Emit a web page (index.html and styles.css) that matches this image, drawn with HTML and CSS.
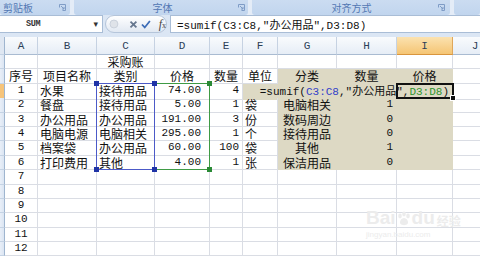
FILE: index.html
```html
<!DOCTYPE html>
<html lang="zh-CN">
<head>
<meta charset="utf-8">
<link rel="stylesheet" href="styles.css">
</head>
<body>
<div class="ribbon">
  <div class="grp g1"><span class="lbl">剪贴板</span><svg class="launch" width="7" height="7" viewBox="0 0 7 7"><path d="M0.5 3.5V0.5H6.5V6.5H3.5" fill="none" stroke="#7f9cc6"/><path d="M2 2L5 5M5 3V5H3" fill="none" stroke="#7f9cc6"/></svg></div>
  <div class="grp g2"><span class="lbl">字体</span><svg class="launch" width="7" height="7" viewBox="0 0 7 7"><path d="M0.5 3.5V0.5H6.5V6.5H3.5" fill="none" stroke="#7f9cc6"/><path d="M2 2L5 5M5 3V5H3" fill="none" stroke="#7f9cc6"/></svg></div>
  <div class="grp g3"><span class="lbl">对齐方式</span><svg class="launch" width="7" height="7" viewBox="0 0 7 7"><path d="M0.5 3.5V0.5H6.5V6.5H3.5" fill="none" stroke="#7f9cc6"/><path d="M2 2L5 5M5 3V5H3" fill="none" stroke="#7f9cc6"/></svg></div>
  <div class="grp g4"></div>
</div>

<div class="fbar">
  <div class="namebox"><span class="nm">SUM</span><span class="dd">▾</span></div>
  <div class="fbtns">
    <svg class="grip" width="10" height="10" viewBox="0 0 10 10"><circle cx="5" cy="5" r="4" fill="#dfe3e9" stroke="#c9d0da"/></svg>
    <svg class="ic-x" width="9" height="9" viewBox="0 0 9 9"><path d="M1.5 1.5L7.5 7.5M7.5 1.5L1.5 7.5" stroke="#66778f" stroke-width="1.8"/></svg>
    <svg class="ic-ok" width="10" height="9" viewBox="0 0 10 9"><path d="M1 4.5L3.8 7.5L9 1" fill="none" stroke="#3d6db7" stroke-width="1.8"/></svg>
    <span class="fx"><i>f</i><span class="fxx">x</span></span>
  </div>
  <div class="formula">=sumif(C3:C8,"<span class="zh11">办公用品</span>",D3:D8)</div>
</div>

<div class="gap"></div>

<div class="sheet">
  <div class="row hdr">
    <div class="rh corner"></div><div>A</div><div>B</div><div>C</div><div>D</div><div>E</div><div>F</div><div>G</div><div>H</div><div class="sel">I</div><div>J</div>
  </div>
  <div class="row">
    <div class="rh"></div><div></div><div></div><div class="c zh">采购账</div><div></div><div></div><div></div><div></div><div></div><div></div><div></div>
  </div>
  <div class="row">
    <div class="rh"></div><div class="c zh">序号</div><div class="c zh">项目名称</div><div class="c zh">类别</div><div class="c zh">价格</div><div class="c zh">数量</div><div class="c zh">单位</div><div class="c zh tan">分类</div><div class="c zh tan">数量</div><div class="c zh tan">价格</div><div></div>
  </div>
  <div class="row">
    <div class="rh act"></div><div class="c">1</div><div class="zh">水果</div><div class="zh">接待用品</div><div class="r num">74.00</div><div class="r">4</div><div class="r tan edit">=sumif(<span class="refc">C3:C8</span>,"<span class="zh11">办公用品</span>",<span class="refd">D3:D8</span>)</div><div></div>
  </div>
  <div class="row">
    <div class="rh"></div><div class="c">2</div><div class="zh">餐盘</div><div class="zh">接待用品</div><div class="r num">5.00</div><div class="r">1</div><div class="zh">袋</div><div class="c zh tan">电脑相关</div><div class="r tan">1</div><div class="tan"></div><div></div>
  </div>
  <div class="row">
    <div class="rh"></div><div class="c">3</div><div class="zh">办公用品</div><div class="zh">办公用品</div><div class="r num">191.00</div><div class="r">3</div><div class="zh">份</div><div class="c zh tan">数码周边</div><div class="r tan">0</div><div class="tan"></div><div></div>
  </div>
  <div class="row">
    <div class="rh"></div><div class="c">4</div><div class="zh">电脑电源</div><div class="zh">电脑相关</div><div class="r num">295.00</div><div class="r">1</div><div class="zh">个</div><div class="c zh tan">接待用品</div><div class="r tan">0</div><div class="tan"></div><div></div>
  </div>
  <div class="row">
    <div class="rh"></div><div class="c">5</div><div class="zh">档案袋</div><div class="zh">办公用品</div><div class="r num">60.00</div><div class="r">100</div><div class="zh">袋</div><div class="c zh tan">其他</div><div class="r tan">1</div><div class="tan"></div><div></div>
  </div>
  <div class="row">
    <div class="rh"></div><div class="c">6</div><div class="zh">打印费用</div><div class="zh">其他</div><div class="r num">4.00</div><div class="r">1</div><div class="zh">张</div><div class="c zh tan">保洁用品</div><div class="r tan">0</div><div class="tan"></div><div></div>
  </div>
  <div class="row">
    <div class="rh"></div><div class="c">7</div><div></div><div></div><div></div><div></div><div></div><div></div><div></div><div></div><div></div>
  </div>
  <div class="row">
    <div class="rh"></div><div class="c">8</div><div></div><div></div><div></div><div></div><div></div><div></div><div></div><div></div><div></div>
  </div>
  <div class="row">
    <div class="rh"></div><div class="c">9</div><div></div><div></div><div></div><div></div><div></div><div></div><div></div><div></div><div></div>
  </div>
  <div class="row">
    <div class="rh"></div><div class="c">10</div><div></div><div></div><div></div><div></div><div></div><div></div><div></div><div></div><div></div>
  </div>
  <div class="row">
    <div class="rh"></div><div class="c">11</div><div></div><div></div><div></div><div></div><div></div><div></div><div></div><div></div><div></div>
  </div>
  <div class="row">
    <div class="rh"></div><div class="c">12</div><div></div><div></div><div></div><div></div><div></div><div></div><div></div><div></div><div></div>
  </div>

  <div class="rng rng-c"><i class="h tl"></i><i class="h tr"></i><i class="h bl"></i><i class="h br"></i></div>
  <div class="rng rng-d"><i class="h tr"></i><i class="h br"></i></div>
  <div class="active"><i class="fill"></i></div>
</div>

<div class="watermark">
  <div class="wm-top"><span class="wm-bai">Bai</span><svg width="16" height="16" viewBox="0 0 16 16"><g fill="#ececec"><ellipse cx="4" cy="5" rx="1.8" ry="2.4"/><ellipse cx="8" cy="3" rx="1.8" ry="2.4"/><ellipse cx="12" cy="5" rx="1.8" ry="2.4"/><path d="M8 7C5 7 3 11 4.5 13C6 14.5 10 14.5 11.5 13C13 11 11 7 8 7Z"/></g></svg><span class="wm-du">du</span><span class="wm-jy">经验</span></div>
  <div class="wm-url">jingyan.baidu.com</div>
</div>
</body>
</html>
```

FILE: styles.css
```css
* { box-sizing: border-box; }

body {
  margin: 0;
  width: 480px;
  height: 256px;
  overflow: hidden;
  background: #ffffff;
  position: relative;
  font-family: "Liberation Mono", "Noto Sans CJK SC", monospace;
  font-size: 11px;
  color: #111;
}

/* ribbon group labels */
.ribbon {
  display: flex;
  height: 15px;
  background: #e4ecf7;
  gap: 4px;
}
.grp {
  height: 15px;
  background: linear-gradient(#cbdcf1, #c1d5ee);
  border-radius: 0 0 3px 3px;
  display: flex;
  align-items: center;
  color: #5277b3;
  font-family: "Noto Sans CJK SC", sans-serif;
  font-size: 10px;
  line-height: 15px;
}
.g1 { width: 70px; padding: 0 4px 0 3px; justify-content: space-between; }
.g2 { width: 174px; padding: 0 3px 0 13px; }
.g3 { width: 198px; padding: 0 5px 0 13px; }
.g4 { flex: 1; }
.grp .lbl { flex: 1; text-align: center; }
.g1 .lbl { flex: none; }
.launch { flex: none; }

/* formula bar */
.fbar {
  display: flex;
  height: 18px;
  background: #dbe6f4;
}
.namebox {
  width: 103px;
  background: #fff;
  border: 1px solid #a9bdd6;
  border-left: 0;
  display: flex;
  align-items: center;
  justify-content: space-between;
  padding: 0 4px 0 26px;
}
.nm {
  font-family: "Liberation Mono", monospace;
  font-size: 8.5px;
  font-weight: bold;
  color: #333;
  letter-spacing: -0.3px;
}
.dd { font-family: "DejaVu Sans", sans-serif; font-size: 9px; color: #333; }
.fbtns {
  margin-left: 2px;
  width: 62px;
  border: 1px solid #b5c5da;
  border-radius: 9px;
  background: linear-gradient(#ffffff, #e1e8f2);
  display: flex;
  align-items: center;
  padding-left: 3px;
}
.grip { margin-right: 10px; }
.ic-x { margin-right: 3px; }
.ic-ok { margin-right: 8px; }
.fx {
  font-family: "Liberation Serif", serif;
  font-size: 12px;
  color: #444;
  line-height: 1;
}
.fxx { font-size: 8px; }
.formula {
  margin-left: 3px;
  flex: 1;
  background: #fff;
  border: 1px solid #a9bdd6;
  border-right: 0;
  padding-left: 6px;
  font-size: 11px;
  line-height: 16px;
  white-space: nowrap;
}
.zh11 { font-family: "Noto Sans CJK SC", sans-serif; font-size: 11px; }

.gap { height: 4px; background: #dbe6f4; }

/* sheet */
.sheet { position: relative; }
.row {
  display: grid;
  grid-template-columns: 5px 33px 59px 58px 55px 33px 35px 59px 60px 56px 45px;
  height: 14.4px;
}
.row > div {
  border-right: 1px solid #dadde4;
  border-bottom: 1px solid #dadde4;
  line-height: 13.4px;
  white-space: nowrap;
  padding: 0 2px;
}
.row > .rh {
  background: linear-gradient(90deg, #e9eff8, #dbe5f2);
  border-right: 1px solid #9fb5cf;
  border-bottom: 1px solid #c5d3e4;
  padding: 0;
}
.row > .rh.act { background: #f6c47a; }

.hdr { height: 18px; }
.hdr > div {
  background: linear-gradient(#f9fbfd, #e6edf6);
  border-right: 1px solid #c6d2e2;
  border-bottom: 1px solid #a9bbd1;
  text-align: center;
  padding-top: 2px;
  line-height: 15px;
  color: #2d3f58;
  font-size: 11px;
}
.hdr > .sel {
  background: linear-gradient(#fbe2b0, #f5c574);
  border-right-color: #e0a75a;
  border-bottom-color: #d9953d;
}
.hdr > .corner { background: #dfe7f2; }

.c { text-align: center; }
.r { text-align: right; padding-right: 3px !important; }
.row > .num { padding-right: 8px !important; }
.zh { font-family: "Noto Sans CJK SC", sans-serif; font-size: 12px; }

.row > .tan {
  background: #ddd9c4;
  border-right-color: #ddd9c4;
  border-bottom-color: #ddd9c4;
}
.row > .edit {
  grid-column: span 4;
}
.refc { color: #3341c9; }
.refd { color: #2f952f; }

/* range highlights and active cell */
.rng {
  position: absolute;
  top: 46px;
  height: 87px;
}
.rng-c { left: 96px; width: 59px; border: 1px solid #4c5ac8; z-index: 3; }
.rng-d { left: 154px; width: 56px; border: 1px solid #3f9b45; z-index: 2; }
.h {
  position: absolute;
  width: 5px;
  height: 5px;
}
.rng-c .h { background: #1f33a6; }
.rng-d .h { background: #2a8a35; }
.h.tl { left: -3px; top: -3px; }
.h.tr { right: -3px; top: -3px; }
.h.bl { left: -3px; bottom: -3px; }
.h.br { right: -3px; bottom: -3px; }

.active {
  position: absolute;
  left: 396px;
  top: 46px;
  width: 58px;
  height: 16px;
  border: 2px solid #111;
  z-index: 4;
}
.fill {
  position: absolute;
  right: -4px;
  bottom: -4px;
  width: 6px;
  height: 6px;
  background: #111;
  border: 1px solid #fff;
}

/* watermark */
.watermark {
  position: absolute;
  left: 366px;
  top: 208px;
  color: #ececec;
}
.wm-top { display: flex; align-items: flex-end; line-height: 1; }
.wm-bai, .wm-du {
  font-family: "Liberation Sans", sans-serif;
  font-weight: bold;
  font-size: 19px;
}
.wm-jy {
  font-family: "Noto Sans CJK SC", sans-serif;
  font-weight: bold;
  font-size: 12px;
  margin-left: 2px;
}
.wm-url {
  font-family: "Liberation Sans", sans-serif;
  font-size: 8px;
  margin-top: 3px;
}
```
